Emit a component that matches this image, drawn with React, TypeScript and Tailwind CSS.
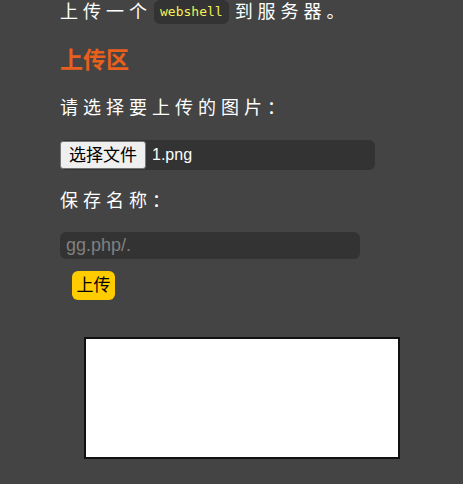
import { useState } from "react";

// ── Upload page ────────────────────────────────────────────────────────────────
export default function App() {
  const [name, setName] = useState("");

  return (
    <div
      className="min-h-screen bg-[#444444] pl-[60px] text-white"
      style={{ fontFamily: '"Liberation Sans", "Noto Sans CJK SC", sans-serif' }}
    >
      {/* Intro line */}
      <p className="flex h-6 items-center text-[18px] leading-6 tracking-[5px]">
        <span>上传一个</span>
        <code className="ml-[2px] mr-[6px] rounded-md bg-[#333333] px-[6px] font-['DejaVu_Sans_Mono',monospace] text-[13px] leading-6 tracking-normal text-[#f5f05a]">
          webshell
        </code>
        <span>到服务器。</span>
      </p>

      {/* Section title */}
      <h2 className="mt-[22px] text-[23px] font-bold leading-[28px] text-[#e8601c]">上传区</h2>

      <p className="mt-[22px] text-[18px] leading-6 tracking-[5px]">请选择要上传的图片：</p>

      {/* File picker */}
      <div className="mt-[20px] flex h-[30px] w-[315px] items-center rounded-md bg-[#333333]">
        <button className="h-[28px] rounded-[3px] border border-[#767676] bg-[#efefef] px-[8px] text-[17px] leading-none text-black">
          选择文件
        </button>
        <span className="ml-[6px] text-[16px]">1.png</span>
      </div>

      <p className="mt-[19px] text-[18px] leading-6 tracking-[5px]">保存名称：</p>

      <input
        value={name}
        onChange={(e) => setName(e.target.value)}
        placeholder="gg.php/."
        className="mt-[19px] block h-[27px] w-[300px] rounded-md bg-[#333333] px-[6px] text-[18px] text-white placeholder:text-[#808080] focus:outline-none"
      />

      <button className="ml-[12px] mt-[12px] block h-[29px] w-[43px] rounded-md bg-[#ffcc00] text-[17px] leading-none text-black">
        上传
      </button>

      {/* Preview frame */}
      <div className="ml-[24px] mt-[37px] h-[122px] w-[316px] border-2 border-[#111111] bg-white" />
    </div>
  );
}
